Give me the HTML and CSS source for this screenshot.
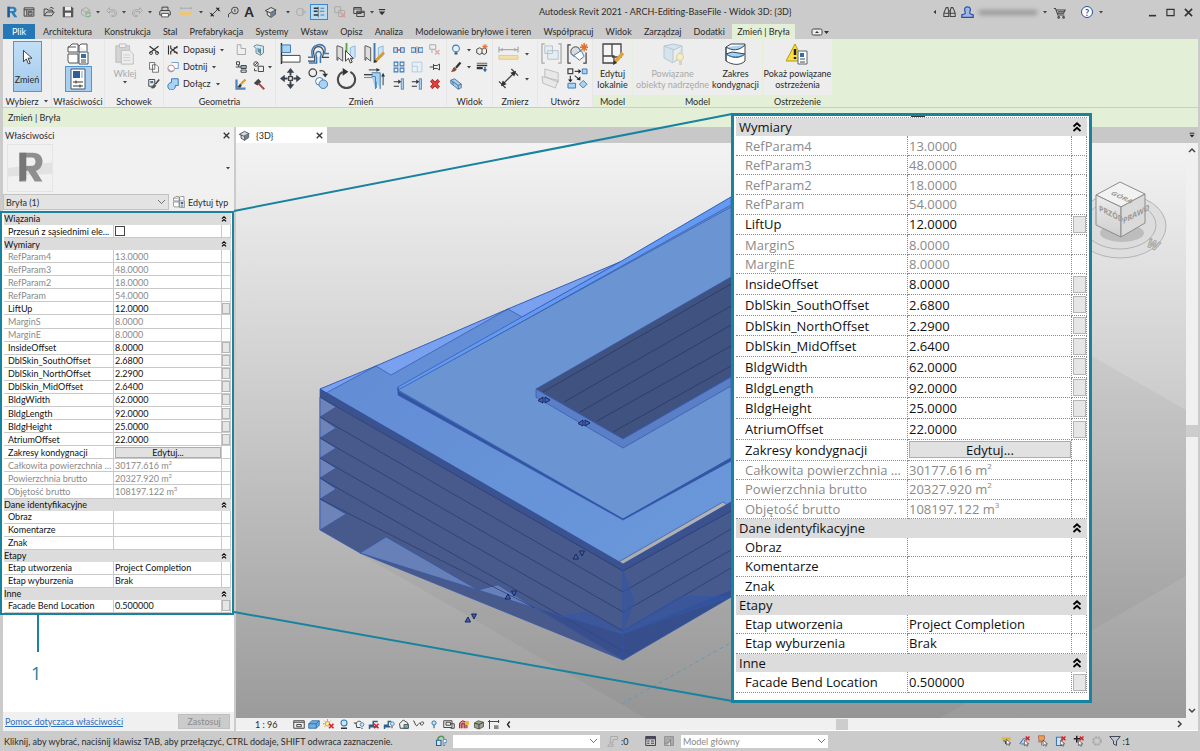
FILE: index.html
```html
<!DOCTYPE html>
<html lang="pl">
<head>
<meta charset="utf-8">
<title>Autodesk Revit 2021 - ARCH-Editing-BaseFile - Widok 3D: {3D}</title>
<link rel="stylesheet" href="styles.css">
</head>
<body>
<svg class="defs" aria-hidden="true">
  <defs>
    <symbol id="caret" viewBox="0 0 6 6"><path d="M1 2h4L3 4.500z" fill="#444"/></symbol>
    <symbol id="logo" viewBox="0 0 16 16"><path d="M2 1h7c7 0 6 8 2 8l4 6h-4L7 9H5v6H2z M5 3.500v3h4c2 0 2-3 0-3z" fill="#2a7fc0" fill-rule="evenodd"/><path d="M2 1h3v14H2z" fill="#1c5c96"/></symbol>
    <symbol id="home" viewBox="0 0 16 16"><path d="M1.500 2.500h13v11h-13zM1.500 5h13M5 5v8" class="st"/><path d="M7 7h5v5H7zM8 9h3" class="st"/></symbol>
    <symbol id="open" viewBox="0 0 16 16"><path d="M1.500 13V4h4l1 1.500h6V8M1.500 13 5 8h10l-3.500 5z" class="st"/><path d="M9 3c2-2 4-1 5 1" class="st"/></symbol>
    <symbol id="save" viewBox="0 0 16 16"><path d="M1 1h12l2 2v12H1z" fill="#555"/><path d="M4 1h8v5H4zM4 9h8v5H4z" fill="#eee"/></symbol>
    <symbol id="sync" viewBox="0 0 16 16"><path d="M2 5l6-3 5 3v4M2 5v6l5 3M2 5l6 3 5-3M8 8v5" class="gl"/><path d="M8 11c2-3 5-3 6 0M14 12c-1 3-5 3-6 1" stroke="#83b98a" stroke-width="2" fill="none"/></symbol>
    <symbol id="undo" viewBox="0 0 16 16"><path d="M6 2 2 6l4 4V7.500h5c3 0 3 5 0 5H9v1.500h3c5-1 4-9 0-9H6z" class="gl"/></symbol>
    <symbol id="redo" viewBox="0 0 16 16"><path d="m10 2 4 4-4 4V7.500H5c-3 0-3 5 0 5h2v1.500H4c-5-1-4-9 0-9h6z" class="gl"/></symbol>
    <symbol id="print" viewBox="0 0 16 16"><path d="M4 6V1.500h8V6M2 6h12l1 2v4H1V8z" class="st" fill="#fff"/><path d="M3.500 10h9v4.500h-9z" fill="#fff" stroke="#333"/></symbol>
    <symbol id="ruler" viewBox="0 0 16 16"><path d="M1 3h14M1 1.500v3M15 1.500v3" class="gl"/><path d="M0 8h16v4H0z" fill="#ecc77b"/></symbol>
    <symbol id="dim" viewBox="0 0 16 16"><path d="M3 13 13 3M1 9l5 5M10 2l5 5" class="st"/><path d="m2 14 1-5 4 4zM14 2l-1 5-4-4z" fill="#333"/></symbol>
    <symbol id="tag" viewBox="0 0 16 16"><circle cx="10.500" cy="6" r="4.500" class="st"/><path d="M10.500 4v4M6 8l-4 3v4" class="st"/></symbol>
    <symbol id="cube" viewBox="0 0 16 16"><path d="m1 6 7-4 6 3v6l-6 4-5-3V7" fill="#d6dbe2" stroke="#444" stroke-width="1.300"/><path d="m0 6 7 3 8-4M8 9v6" class="st"/><path d="M8 9l6-3v5l-6 4z" fill="#6e7d90"/></symbol>
    <symbol id="section" viewBox="0 0 16 16"><circle cx="7" cy="8" r="5" class="gl"/><path d="m9 3 6 5-6 5z" fill="#b5b5b5"/></symbol>
    <symbol id="thin" viewBox="0 0 16 16"><path d="M1 3h6M1 7h5M1 12h6" stroke="#333" stroke-width="2"/><path d="M10 3h5M9 7h6M10 12h5M7 1v14" stroke="#333" stroke-width=".8"/></symbol>
    <symbol id="closewin" viewBox="0 0 16 16"><path d="M1 1h8v8H1zM6 6h8v8H6z" class="gl"/><path d="m9 9 6 6m0-6-6 6" stroke="#e39a9a" stroke-width="2"/></symbol>
    <symbol id="switch" viewBox="0 0 16 16"><path d="M1 2h10v8H1zM1 4h10M5 7h10v7H5z" class="st" fill="#ddd"/><path d="M5 8.500h10" class="st"/></symbol>
    <symbol id="bino" viewBox="0 0 16 16"><path d="M2 6 4 2h2l1 4v7H1V9zM14 6l-2-4h-2L9 6v7h6V9zM7 6h2v3H7M1 9h6M9 9h6" class="st" fill="#eee"/></symbol>
    <symbol id="user" viewBox="0 0 16 16"><path d="M8 1c4 0 4 3 3 6-1 2 0 3 4 4v3H1v-3c4-1 5-2 4-4C4 4 4 1 8 1z" fill="#9db8e6" stroke="#2b4fa0" stroke-width="1.500"/></symbol>
    <symbol id="cart" viewBox="0 0 16 16"><path d="M1 3h2l3 8h8M4 5h11l-2 4H5M6 7h8" class="st"/><circle cx="7" cy="14" r="1" class="st"/><circle cx="13" cy="14" r="1" class="st"/></symbol>
    <symbol id="chev2" viewBox="0 0 10 12"><path d="M1.500 5.500 5 2.300l3.500 3.200M1.500 10 5 6.800 8.500 10" fill="none" stroke="#000" stroke-width="1.800"/></symbol>
    <symbol id="x" viewBox="0 0 10 10"><path d="m1 1 8 8M9 1 1 9" stroke="#333" stroke-width="1.800"/></symbol>
    <symbol id="cursor" viewBox="0 0 16 24"><path d="M3 2v16l4-4 3 7 2.500-1-3-7H15z" fill="#fff" stroke="#333" stroke-width="1.300"/></symbol>
    <symbol id="types" viewBox="0 0 22 22"><path d="M2 4 5 1h6v8H1V4zM12 3l2-2h6v7M1 11l10 0v9H2l-1-2zM12 2v7M1 4h8" fill="#fff" stroke="#555"/><path d="M12 9h9v12h-9z" fill="#fff" stroke="#456"/><path d="M14 11h5v4h-5z" fill="#356ea5"/><path d="M14 17h5M14 19h5" stroke="#444"/></symbol>
    <symbol id="props" viewBox="0 0 16 22"><path d="M1 1h14v20H1z" fill="#fff" stroke="#456"/><path d="M3 3h7v7H3z" fill="#2e6094"/><path d="M11 3h2v7h-2z" fill="#b9d0e4"/><path d="M3 14h10M3 18h10M6 12.500v3M10 16.500v3" stroke="#333"/></symbol>
    <symbol id="paste" viewBox="0 0 22 24"><path d="M1 3h15v18H1z" fill="#d4d4d4" stroke="#bbb"/><path d="M5 1h7v4H5zM7 8h9l4 4v11H7z" fill="#eee" stroke="#bbb"/><path d="M9 13h8M9 16h8M9 19h8" stroke="#ccc"/></symbol>
    <symbol id="cut" viewBox="0 0 16 16"><path d="m2 3 12 9M14 3 2 12" stroke="#333" stroke-width="1.600"/><circle cx="4" cy="12" r="2" class="st"/><circle cx="12" cy="12" r="2" class="st"/></symbol>
    <symbol id="copy" viewBox="0 0 16 16"><path d="M2 2h7v9H2zM6 5h5l3 3v7H6z" fill="#f6f6f6" stroke="#555"/></symbol>
    <symbol id="match" viewBox="0 0 16 16"><path d="M1 2h8v9H1z" class="st"/><path d="M3 4h4v3H3z" fill="#3f79b5"/><path d="M3 13c3 0 3-4 5-5l3 2c-2 4-4 5-8 3z" fill="#555"/><path d="m10 8 5-6" stroke="#444" stroke-width="2"/></symbol>
    <symbol id="cope" viewBox="0 0 16 16"><path d="M2 2v12M5 2v4l3 2-3 2v4M8 8l6-5M8 8l6 5M9 5h5M9 11h5" stroke="#333" stroke-width="1.500" fill="none"/></symbol>
    <symbol id="cutgeo" viewBox="0 0 16 16"><path d="M6 2h9v8h-5" fill="#f4faff" stroke="#4a88bd"/><circle cx="5.500" cy="10" r="4.500" fill="#fff" stroke="#c66"/><path d="M2 10a4 4 0 0 0 6 3" stroke="#4a88bd" fill="none"/></symbol>
    <symbol id="join" viewBox="0 0 16 16"><path d="M6 1h9v9h-4a5 5 0 1 1-5-4z" fill="#a9d3f2" stroke="#3f79b5" stroke-width="1.300"/></symbol>
    <symbol id="joinend" viewBox="0 0 16 16"><path d="M3 1h5v5h6v8H3z" class="gl"/></symbol>
    <symbol id="beam" viewBox="0 0 16 16"><path d="M2 1h4v4H2zM1 8h14M5 5v3M8 6h7v4H8zM8 12h7v3H8z" class="st"/><path d="M9 7h5v2H9z" fill="#8ab8dd"/></symbol>
    <symbol id="demolish" viewBox="0 0 16 16"><path d="M2 2v12h12" stroke="#4a88bd" stroke-width="3" fill="none"/><path d="M6 10 14 2" stroke="#e39a2c" stroke-width="3"/><path d="m3 12 4-4 2 2-2 3" fill="#333"/></symbol>
    <symbol id="uncope" viewBox="0 0 16 16"><path d="m1 3 4-2 9 2v9l-4 3-6-3V6z" fill="#cfe4f5" stroke="#476"/><path d="m6 5 4 2v6l-4-3z" fill="#5d92c4"/><path d="M10 6v8" stroke="#476"/></symbol>
    <symbol id="split" viewBox="0 0 16 16"><circle cx="4" cy="4" r="3" class="st"/><path d="m2 6 4-4M7 7h7v7H7z" class="st"/><path d="M2 10v3h3" class="st"/></symbol>
    <symbol id="hammer" viewBox="0 0 16 16"><path d="m1 7 6-6 4 4-5 5z" fill="#444"/><path d="m7 7 8 8" stroke="#9a5151" stroke-width="2.500"/></symbol>
    <symbol id="align" viewBox="0 0 22 22"><path d="M1.500 0v22" stroke="#333" stroke-width="1.500"/><path d="M2 2h9v8H2z" fill="#a9d3f2" stroke="#3f79b5"/><path d="M2 13h19v7H2z" fill="#fff" stroke="#444"/></symbol>
    <symbol id="offset" viewBox="0 0 22 22"><path d="M0 19h7v-4C1 0 21 0 15 15h7" fill="none" stroke="#444" stroke-width="1.200"/><path d="M0 15h5C-1-2 23-2 17 11h5M1 21h8v-6c-4-8 8-8 4 0v6" fill="none" stroke="#3f79b5" stroke-width="1.600"/></symbol>
    <symbol id="mirror" viewBox="0 0 22 22"><path d="m2 3 5 2v14l-5-4v3H1V3z" fill="#ddd" stroke="#555"/><path d="m20 3-5 2v14l5-4z" fill="#cde5f7" stroke="#8ab8dd"/><path d="M11 0v9" stroke="#59a83f" stroke-width="2"/><path d="M10 8v11l3-3 2 5 2-1-2-4h3z" fill="#fff" stroke="#333"/></symbol>
    <symbol id="mirror2" viewBox="0 0 22 22"><path d="m2 3 5 2v14l-5-4v3H1V3z" fill="#ddd" stroke="#555"/><path d="m20 3-5 2v12l5-4z" fill="#cde5f7" stroke="#8ab8dd"/><path d="M11 0v20" stroke="#3f79b5" stroke-width="2"/><path d="m12 19 9-9" stroke="#d99b32" stroke-width="3"/><path d="m10 21 1-4 3 3z" fill="#333"/></symbol>
    <symbol id="move" viewBox="0 0 22 22"><path d="M11 0 7 5h3v3h2V5h3zM11 22l-4-5h3v-3h2v3h3zM0 11l5-4v3h3v2H5v3zM22 11l-5-4v3h-3v2h3v3z" fill="#3b4350"/><path d="M9 9h4v4H9z" class="st"/></symbol>
    <symbol id="copy2" viewBox="0 0 22 22"><circle cx="5" cy="5" r="4" class="st"/><path d="M12 3c4-1 6 1 6 4" class="st"/><path d="m15 6 3 4 3-4z" fill="#333"/><circle cx="12" cy="14" r="4" fill="#fff" stroke="#3f79b5"/><circle cx="16" cy="17" r="4.500" fill="#a9d3f2" stroke="#3f79b5"/></symbol>
    <symbol id="rotate" viewBox="0 0 22 22"><path d="M7 4a9 9 0 1 0 8 0" fill="none" stroke="#4a4a4a" stroke-width="2.200"/><path d="M7 0v8l6-4z" fill="#333"/></symbol>
    <symbol id="trim" viewBox="0 0 22 22"><path d="M0 7h10" stroke="#444" stroke-width="1.500"/><path d="M0 10h10M13 12v9" stroke="#4a88bd" stroke-width="1"/><path d="M8 5h9v17M12 22V9H8" fill="#a9d3f2" stroke="#3f79b5"/><path d="M20 8v10M5 2h9" stroke="#333"/><path d="m18 9 2-4 2 4zM13 0l4 2-4 2z" fill="#333"/></symbol>
    <symbol id="sp1" viewBox="0 0 16 16"><path d="M1 5h5v6H1zM10 5h5v6h-5z" fill="#cde5f7" stroke="#3f79b5" stroke-width="1.400"/><path d="M5 8h6" stroke="#c55" stroke-width="2"/></symbol>
    <symbol id="sp2" viewBox="0 0 16 16"><path d="M0 5h6v6H0zM10 5h6v6h-6z" fill="#cde5f7" stroke="#3f79b5" stroke-width="1.400"/><path d="M8 3v10" stroke="#c55"/></symbol>
    <symbol id="arr" viewBox="0 0 16 16"><path d="M1.500 1.500h5v5h-5zM9.500 1.500h5v5h-5zM1.500 9.500h5v5h-5zM9.500 9.500h5v5h-5z" fill="#e6f2fb" stroke="#3f79b5" stroke-width="1.400"/></symbol>
    <symbol id="scale" viewBox="0 0 16 16"><path d="M1.500 1.500h13v13h-13zM1.500 7h7v7.500" fill="#e6f0f6" stroke="#a9c4d6"/></symbol>
    <symbol id="pin" viewBox="0 0 16 16"><path d="M1 8h5M6 4v8M6 6h5l3-2v8l-3-2H6" class="st" fill="#fff"/></symbol>
    <symbol id="unpin" viewBox="0 0 16 16"><path d="M1 1h8v6H1zM4 7v5" class="gl"/><path d="m8 8 6 6m0-6-6 6" stroke="#e2a9a9" stroke-width="2"/></symbol>
    <symbol id="ext" viewBox="0 0 16 16"><path d="M1 5h7M1 11h7" stroke="#333" stroke-width="1.500"/><path d="M11 1h3v14h-3z" fill="#a9d3f2" stroke="#3f79b5"/><path d="m7 2 4 3-4 3z" fill="#333"/></symbol>
    <symbol id="redx" viewBox="0 0 16 16"><path d="m3 3 10 10M13 3 3 13" stroke="#a11" stroke-width="4.500"/><path d="m3 3 10 10M13 3 3 13" stroke="#e34545" stroke-width="2.500"/></symbol>
    <symbol id="bulb" viewBox="0 0 16 16"><circle cx="8" cy="6" r="4.500" fill="#e2f1fb" stroke="#3f79b5" stroke-width="1.400"/><path d="M6 11h4v3H6z" fill="#456"/></symbol>
    <symbol id="brush" viewBox="0 0 16 16"><path d="M1 14c3-1 2-5 5-6l3 3c-2 3-4 4-8 3z" fill="#8b4a2c"/><path d="m8 9 6-7" stroke="#333" stroke-width="3"/></symbol>
    <symbol id="box" viewBox="0 0 16 16"><path d="m1 3 5-2 9 7v5l-4 2-10-8z" fill="#a9cbe6" stroke="#2f5f8d"/><path d="m1 3 10 7 4-2M11 10v5M4 5v4" fill="none" stroke="#2f5f8d"/></symbol>
    <symbol id="displace" viewBox="0 0 16 16"><path d="m1 7 4-2 3 2v5l-3 2-4-2zM8 7l3-2 3 2v5l-3 2-3-2" class="st"/><path d="M12 0v7M8.500 3.500h7M9.500 1l5 5m0-5-5 5" stroke="#e1702c" stroke-width="1.300"/></symbol>
    <symbol id="lw" viewBox="0 0 16 16"><path d="M1 3h14" stroke="#333"/><path d="M1 6h14" stroke="#333" stroke-width="2"/><path d="M1 9.500h8" stroke="#333" stroke-width="3"/><path d="m9 11 3 4 3-4z" fill="#2d66b5"/><path d="M12 8v4" stroke="#2d66b5" stroke-width="2"/></symbol>
    <symbol id="meas" viewBox="0 0 22 22"><path d="M1 7h20M1 4v6M21 4v6" class="gl"/><path d="m2 7 3-2v4zM20 7l-3-2v4z" fill="#aaa"/><path d="M1 13h20v4H1z" fill="#f3dfae" stroke="#e0c98e"/></symbol>
    <symbol id="dimbig" viewBox="0 0 22 22"><path d="M4 18 18 4M1 14l7 7M14 1l7 7" class="st"/><path d="m3 19 2-6 4 4zM19 3l-2 6-4-4z" fill="#333"/></symbol>
    <symbol id="grp" viewBox="0 0 22 22"><path d="M4 1H1v20h3M18 1h3v20h-3" class="gl"/><path d="M4 3h8v8H4zM7 8h11v9H7z" fill="#e6edf2" stroke="#b6c2cc"/></symbol>
    <symbol id="grp2" viewBox="0 0 22 22"><path d="M4 2H1v19h3M17 21h3V10" class="st"/><circle cx="9" cy="9" r="5" fill="#d8dce2" stroke="#444"/><path d="m7 13 8-5 3 6-5 4z" fill="#fff" stroke="#3f79b5"/><path d="M18 0v9M13.500 4.500h9M15 1.500l6 6m0-6-6 6" stroke="#e1702c" stroke-width="1.500"/></symbol>
    <symbol id="sheets" viewBox="0 0 22 22"><path d="m4 1 14 4v10L4 9zM1 9l17 4-3 8-13-5z" fill="#e8e8e8" stroke="#bdbdbd"/></symbol>
    <symbol id="similar" viewBox="0 0 22 22"><path d="M1 1h5v5H1z" class="st"/><path d="M16 1h5v5h-5zM1 16h8v5H1zM17 13l4 4-4 4-4-4z" fill="#a9d3f2" stroke="#3f79b5"/><path d="M8 3.500h5M3.500 8v5M8 8l5 4" class="st"/><path d="m12 1 3 2.500L12 6zM1 12l2.500 3L6 12zM14 9v4l-4-1z" fill="#222"/></symbol>
    <symbol id="editip" viewBox="0 0 22 22"><path d="M1 1h9v12H1zM1 13h11v7H1zM10 1h9v13h-9" fill="#f5f5f5" stroke="#444" stroke-width="1.300"/><path d="m13 19 8-9" stroke="#e0a436" stroke-width="3.500"/><path d="m11 22 1-5 3 3z" fill="#333"/></symbol>
    <symbol id="related" viewBox="0 0 22 22"><path d="m2 3 9-2 9 2-8 4zM2 3v12l9 5V7M20 3v11l-8 5" fill="#d5e4ec" stroke="#b5c8d2"/><circle cx="18" cy="14" r="3.500" fill="#f7eec2" stroke="#d8d0a3"/><path d="M17 18h3v4h-3z" fill="#d8d4b7"/></symbol>
    <symbol id="floors" viewBox="0 0 22 22"><path d="m1 4 5-3h14v17c-5 5-13 4-19 0z" fill="#fff" stroke="#444"/><path d="M1 4c6 4 13 4 19-2M1 4v14M1 11l6-2 13 2c-6 5-13 4-19 0z" fill="#a9d3f2" stroke="#345"/><path d="M1 11c6 4 13 4 19 0" fill="none" stroke="#3f79b5"/></symbol>
    <symbol id="warn" viewBox="0 0 22 22"><path d="M9 1 0 18h17z" fill="#f8de42" stroke="#b79718"/><path d="M9 6v6M9 14v2" stroke="#222" stroke-width="2.500"/><path d="M12 8h9v13h-9z" fill="#fff" stroke="#567"/><path d="M14 10h4v4h-4z" fill="#356ea5"/><path d="M14 16h5M14 19h5" stroke="#444"/></symbol>
    <symbol id="grip" viewBox="0 0 14 8"><path d="M1 4.500 6 1v6zM8 1v6l5-3z" fill="#4062b0" stroke="#15265c"/></symbol>
    <symbol id="grip2" viewBox="0 0 14 10"><path d="m1 9 3-5 2.500 5zM7.500 1h5L10 6z" fill="#4062b0" stroke="#15265c"/></symbol>
    <symbol id="v1" viewBox="0 0 16 14"><path d="M1 2h14v10H1zM1 4h14M5 7h6v3H5z" class="st"/></symbol>
    <symbol id="v2" viewBox="0 0 16 14"><path d="m1 6 4-4h10v6l-4 4H1z" fill="#6db1e4" stroke="#1f5e95"/><path d="M1 6h10v6M11 6l4-4" fill="none" stroke="#1f5e95"/></symbol>
    <symbol id="v3" viewBox="0 0 16 14"><circle cx="6" cy="6" r="3" fill="#fde8a3" stroke="#c98714"/><path d="M6 0v2M0 6h2M2 2l1 1M10 2 9 3M2 10l1-1" stroke="#c98714" stroke-width="1.300"/><path d="m8 6 6 6m0-6-6 6" stroke="#d22" stroke-width="2.200"/></symbol>
    <symbol id="v4" viewBox="0 0 16 14"><circle cx="8" cy="5" r="4" fill="#c9e6f8" stroke="#2f79b3" stroke-width="1.400"/><path d="M4 12h8" stroke="#333" stroke-width="2"/></symbol>
    <symbol id="v5" viewBox="0 0 16 14"><path d="M1 5h3l1 6h5M4 6c1-4 6-4 7-2" class="st"/><circle cx="12" cy="7" r="2.500" fill="#c9e6f8" stroke="#2f79b3"/><path d="M11 12h2" class="st"/></symbol>
    <symbol id="v6" viewBox="0 0 16 14"><path d="M2 13V8h5V3h6M1 10h12" fill="none" stroke="#2f5f8d" stroke-width="2"/><path d="m8 6 6 6m0-6-6 6" stroke="#d22" stroke-width="2.200"/></symbol>
    <symbol id="v7" viewBox="0 0 16 14"><path d="M2 13V8h5V3h4M1 10h9" fill="none" stroke="#2f5f8d" stroke-width="1.800"/><circle cx="12.500" cy="6" r="2.500" fill="#c9e6f8" stroke="#2f79b3"/><path d="M12 9v3" class="st"/></symbol>
    <symbol id="v8" viewBox="0 0 16 14"><path d="m2 6 5-5 6 4v7H3z" class="st" fill="#ddd"/><path d="M8 7h6v5H8z" fill="#7fae93" stroke="#345"/></symbol>
    <symbol id="v9" viewBox="0 0 16 14"><path d="M0 2c3 0 2 6 5 7 3-4 4-4 5-4 3-3 5-1 4 1s-5 3-4-1" class="st"/></symbol>
    <symbol id="v10" viewBox="0 0 16 14"><circle cx="8" cy="5" r="2.800" fill="#c9e6f8" stroke="#2f79b3" stroke-width="1.300"/><path d="M8 8v4" class="st"/></symbol>
    <symbol id="v11" viewBox="0 0 16 14"><path d="M1 2h11v9H1zM4 4h6v4H4zM10 6h5v6h-5" class="st"/></symbol>
    <symbol id="v12" viewBox="0 0 16 14"><path d="M2 12V5l4-3 6 2v8M5 12V6h4v6" fill="#d98b8b" stroke="#833" stroke-width="1.300"/><circle cx="12" cy="5" r="3" fill="#f5b53d"/></symbol>
    <symbol id="v13" viewBox="0 0 16 14"><path d="m2 5 5-3 7 2v6l-6 3-6-2z" fill="#9aa68c" stroke="#444"/><path d="M2 5l6 2 6-3M8 7v6" class="st"/></symbol>
    <symbol id="v14" viewBox="0 0 16 14"><path d="M2 1v12M0 3h15M14 1v4" class="st"/><path d="M8 8h6v5H8z" fill="#888"/></symbol>
    <symbol id="lock" viewBox="0 0 16 16"><path d="M4 7c-1-6 7-7 8-2" fill="none" stroke="#4a9a5b" stroke-width="2"/><path d="M2 7h6v7H2z" fill="#c9e6f8" stroke="#2f5f8d" stroke-width="1.400"/><path d="M11 6h4v4h-2v4h-2z" fill="#fff" stroke="#2f79b3"/></symbol>
    <symbol id="press" viewBox="0 0 16 16"><path d="M5 2h9v4H8v4H4zM3 12h5v3H1z" class="gl"/></symbol>
    <symbol id="wset" viewBox="0 0 16 16"><path d="M1 2h13v12H1zM1 5h13" class="st" fill="#fff"/><path d="M1 2h13v3H1z" fill="#446"/><path d="M3 8h3M3 11h3M8 8h4M8 11h4" class="st"/></symbol>
    <symbol id="wset2" viewBox="0 0 16 16"><path d="M2 2h12v12H2z" fill="#aaa" stroke="#888"/><path d="M2 11h5l3-5v8" fill="#ddd" stroke="#777"/></symbol>
    <symbol id="arrow" viewBox="0 0 10 12"><path d="M1 1v9l2.500-2L5 11l1.500-1L5 7h3z" fill="#fff" stroke="#333"/></symbol>
    <symbol id="filter" viewBox="0 0 16 16"><path d="M1 2h14L10 8v6l-4-2V8z" fill="#b9cbd9" stroke="#445" stroke-width="1.300"/></symbol>
    <linearGradient id="topface" x1="0" y1="0" x2="1" y2="1"><stop offset="0" stop-color="#5f87d2"/><stop offset="1" stop-color="#6c9bdc"/></linearGradient>
    <linearGradient id="cubeface" x1="0" y1="0" x2="0" y2="1"><stop offset="0" stop-color="#ececec"/><stop offset="1" stop-color="#cfcfcf"/></linearGradient>
  </defs>
</svg>

<div class="app">
  <header class="titlebar">
    <div class="quick">
      <svg class="i16"><use href="#logo"/></svg>
      <button aria-label="Strona główna"><svg><use href="#home"/></svg></button>
      <button aria-label="Otwórz"><svg><use href="#open"/></svg></button>
      <button aria-label="Zapisz"><svg><use href="#save"/></svg></button>
      <button aria-label="Synchronizuj"><svg><use href="#sync"/></svg></button>
      <button aria-label="Więcej"><svg class="ct"><use href="#caret"/></svg></button>
      <button aria-label="Cofnij"><svg><use href="#undo"/></svg></button>
      <button aria-label="Lista cofania"><svg class="ct"><use href="#caret"/></svg></button>
      <button aria-label="Ponów"><svg><use href="#redo"/></svg></button>
      <button aria-label="Lista ponowień"><svg class="ct"><use href="#caret"/></svg></button>
      <button aria-label="Drukuj"><svg><use href="#print"/></svg></button>
      <button aria-label="Zmierz"><svg><use href="#ruler"/></svg></button>
      <button aria-label="Opcje pomiaru"><svg class="ct"><use href="#caret"/></svg></button>
      <button aria-label="Wymiar"><svg><use href="#dim"/></svg></button>
      <button aria-label="Etykieta"><svg><use href="#tag"/></svg></button>
      <button class="bigA">A</button>
      <button aria-label="Widok 3D"><svg><use href="#cube"/></svg></button>
      <button aria-label="Opcje widoku"><svg class="ct"><use href="#caret"/></svg></button>
      <button aria-label="Przekrój"><svg><use href="#section"/></svg></button>
      <button class="on" aria-label="Cienkie linie"><svg><use href="#thin"/></svg></button>
      <button aria-label="Zamknij nieaktywne"><svg><use href="#closewin"/></svg></button>
      <button aria-label="Przełącz okna"><svg><use href="#switch"/></svg></button>
      <button aria-label="Lista okien"><svg class="ct"><use href="#caret"/></svg></button>
      <button aria-label="Dostosuj"><svg class="i10" viewBox="0 0 10 10"><path d="M1 2h8" stroke="#333" stroke-width="1.500"/><path d="M1 4.500h8L5 9z" fill="#333"/></svg></button>
    </div>
    <h1>Autodesk Revit 2021 - ARCH-Editing-BaseFile - Widok 3D: {3D}</h1>
    <div class="account">
      <svg viewBox="0 0 6 6" class="ct"><path d="M4 1v4L1.500 3z" fill="#333"/></svg>
      <button aria-label="Szukaj"><svg><use href="#bino"/></svg></button>
      <button aria-label="Konto"><svg><use href="#user"/></svg></button>
      <span class="hidden-name"></span>
      <svg class="ct"><use href="#caret"/></svg>
      <button aria-label="Sklep"><svg><use href="#cart"/></svg></button>
      <button aria-label="Pomoc" class="help">?</button>
      <svg class="ct"><use href="#caret"/></svg>
    </div>
    <div class="winbtns">
      <button aria-label="Minimalizuj"><svg viewBox="0 0 10 10"><path d="M1 8.500h8" stroke="#333" stroke-width="1.800"/></svg></button>
      <button aria-label="Maksymalizuj"><svg viewBox="0 0 10 10"><path d="M1 1.500h8v7H1z" fill="none" stroke="#333" stroke-width="1.300"/></svg></button>
      <button aria-label="Zamknij"><svg><use href="#x"/></svg></button>
    </div>
  </header>

  <nav class="tabs">
    <a class="file" href="#">Plik</a>
    <div class="tablist">
      <a href="#">Architektura</a><a href="#">Konstrukcja</a><a href="#">Stal</a><a href="#">Prefabrykacja</a><a href="#">Systemy</a><a href="#">Wstaw</a><a href="#">Opisz</a><a href="#">Analiza</a><a href="#">Modelowanie bryłowe i teren</a><a href="#">Współpracuj</a><a href="#">Widok</a><a href="#">Zarządzaj</a><a href="#">Dodatki</a>
    </div>
    <a class="active" href="#">Zmień | Bryła</a>
    <button class="collapse" aria-label="Zwiń wstążkę"><svg viewBox="0 0 18 8"><rect x="1" y="1" width="10" height="6" rx="1.500" fill="#eee" stroke="#444"/><path d="M4 5h4L6 3zM13 3h5l-2.500 3z" fill="#333"/></svg></button>
  </nav>

  <div class="ribbon">
    <section class="panel select">
      <div class="body"><button class="modify"><svg><use href="#cursor"/></svg>Zmień</button></div>
      <h2>Wybierz <svg class="ct"><use href="#caret"/></svg></h2>
    </section>
    <section class="panel">
      <div class="body stack"><button aria-label="Typy"><svg><use href="#types"/></svg></button><button class="on" aria-label="Właściwości"><svg><use href="#props"/></svg></button></div>
      <h2>Właściwości</h2>
    </section>
    <section class="panel">
      <div class="body clip">
        <button class="tall dim"><svg><use href="#paste"/></svg>Wklej<svg class="ct"><use href="#caret"/></svg></button>
        <div class="small one"><button aria-label="Wytnij"><svg><use href="#cut"/></svg></button><button aria-label="Kopiuj"><svg><use href="#copy"/></svg></button><button aria-label="Uzgodnij"><svg><use href="#match"/></svg></button></div>
      </div>
      <h2>Schowek</h2>
    </section>
    <section class="panel">
      <div class="body geo">
        <button><svg><use href="#cope"/></svg>Dopasuj<svg class="ct"><use href="#caret"/></svg></button><button aria-label="Dach"><svg><use href="#joinend"/></svg></button><button aria-label="Otwór"><svg><use href="#uncope"/></svg></button><i></i>
        <button><svg><use href="#cutgeo"/></svg>Dotnij<svg class="ct"><use href="#caret"/></svg></button><button aria-label="Belka"><svg><use href="#beam"/></svg></button><button aria-label="Podziel"><svg><use href="#split"/></svg></button><svg class="ct"><use href="#caret"/></svg>
        <button><svg><use href="#join"/></svg>Dołącz<svg class="ct"><use href="#caret"/></svg></button><button aria-label="Maluj"><svg><use href="#demolish"/></svg></button><button aria-label="Wyburz"><svg><use href="#hammer"/></svg></button><i></i>
      </div>
      <h2>Geometria</h2>
    </section>
    <section class="panel">
      <div class="body mod">
        <div class="large"><button aria-label="Wyrównaj"><svg><use href="#align"/></svg></button><button aria-label="Odsunięcie"><svg><use href="#offset"/></svg></button><button aria-label="Lustro"><svg><use href="#mirror"/></svg></button><button aria-label="Lustro z osią"><svg><use href="#mirror2"/></svg></button><button aria-label="Przesuń"><svg><use href="#move"/></svg></button><button aria-label="Kopiuj"><svg><use href="#copy2"/></svg></button><button aria-label="Obróć"><svg><use href="#rotate"/></svg></button><button aria-label="Przytnij"><svg><use href="#trim"/></svg></button></div>
        <div class="small three"><button aria-label="Rozdziel"><svg><use href="#sp1"/></svg></button><button aria-label="Rozdziel z odstępem"><svg><use href="#sp2"/></svg></button><button aria-label="Odepnij"><svg><use href="#unpin"/></svg></button><button aria-label="Szyk"><svg><use href="#arr"/></svg></button><button aria-label="Skala"><svg><use href="#scale"/></svg></button><button aria-label="Przypnij"><svg><use href="#pin"/></svg></button><button aria-label="Wydłuż"><svg><use href="#ext"/></svg></button><button aria-label="Wydłuż wiele"><svg><use href="#ext"/></svg></button><button aria-label="Usuń"><svg><use href="#redx"/></svg></button></div>
      </div>
      <h2>Zmień</h2>
    </section>
    <section class="panel">
      <div class="body small view3"><button aria-label="Ukryj"><svg><use href="#bulb"/></svg></button><svg class="ct"><use href="#caret"/></svg><button aria-label="Przemieść"><svg><use href="#displace"/></svg></button><button aria-label="Zastąp"><svg><use href="#brush"/></svg></button><svg class="ct"><use href="#caret"/></svg><button aria-label="Szerokość linii"><svg><use href="#lw"/></svg></button><button aria-label="Ramka"><svg><use href="#box"/></svg></button></div>
      <h2>Widok</h2>
    </section>
    <section class="panel">
      <div class="body large meas"><button aria-label="Zmierz"><svg><use href="#meas"/></svg></button><svg class="ct"><use href="#caret"/></svg><button aria-label="Wymiar"><svg><use href="#dimbig"/></svg></button><svg class="ct"><use href="#caret"/></svg></div>
      <h2>Zmierz</h2>
    </section>
    <section class="panel">
      <div class="body large create"><button aria-label="Zespół"><svg><use href="#grp"/></svg></button><button aria-label="Grupa"><svg><use href="#grp2"/></svg></button><button aria-label="Części"><svg><use href="#sheets"/></svg></button><button aria-label="Utwórz podobne"><svg><use href="#similar"/></svg></button></div>
      <h2>Utwórz</h2>
    </section>
    <section class="panel ctx">
      <div class="body row"><button class="tall"><svg><use href="#editip"/></svg>Edytuj<br>lokalnie</button></div>
      <h2>Model</h2>
    </section>
    <section class="panel ctx">
      <div class="body row"><button class="tall dim"><svg><use href="#related"/></svg>Powiązane<br>obiekty nadrzędne</button><button class="tall"><svg><use href="#floors"/></svg>Zakres<br>kondygnacji</button></div>
      <h2>Model</h2>
    </section>
    <section class="panel ctx">
      <div class="body row"><button class="tall"><svg><use href="#warn"/></svg>Pokaż powiązane<br>ostrzeżenia</button></div>
      <h2>Ostrzeżenie</h2>
    </section>
  </div>
  <div class="options">Zmień | Bryła</div>

  <main class="work">
    <aside class="palette">
      <div class="phead"><h2>Właściwości</h2><button aria-label="Zamknij"><svg><use href="#x"/></svg></button></div>
      <div class="preview"><div class="thumb"><svg viewBox="0 0 46 46"><path d="M0 23 46 17v12L0 32z" fill="#e2e2e2"/><path d="M12 7h14c14 0 12 17 3 19l7 11h-8l-7-11h-2v11h-7z M19 12v9h6c5 0 5-9 0-9z" fill="#8f8f8f" fill-rule="evenodd"/><path d="M12 7h7v28l-7 2z" fill="#777"/></svg></div><svg class="ct"><use href="#caret"/></svg></div>
      <div class="typebar"><select aria-label="Typ elementu"><option>Bryła (1)</option></select><button><svg><use href="#types"/></svg>Edytuj typ</button></div>
      <div class="gridbox"><table class="props" id="props-small"></table></div>
      <div class="empty"></div>
      <div class="pfoot"><a href="#">Pomoc dotyczaca właściwości</a><button disabled>Zastosuj</button></div>
    </aside>

    <section class="viewport">
      <div class="viewtabs"><div class="viewtab"><svg><use href="#cube"/></svg><span>{3D}</span><button aria-label="Zamknij kartę"><svg><use href="#x"/></svg></button></div><svg class="more" viewBox="0 0 10 10"><path d="M1 2h8" stroke="#222" stroke-width="1.500"/><path d="M1 4.500h8L5 9z" fill="#222"/></svg></div>
      <div class="canvasrow">
        <svg class="scene" viewBox="236 143 950 575" preserveAspectRatio="xMinYMin slice">
          <path d="M360 554 645 718H940L1186 576V410L1090 355z" fill="#000" opacity=".035"/>
          <g stroke="#3057ae" stroke-width=".7" stroke-linejoin="round">
            <path d="m320 389 56-23 132-57 112-47 111-65 100-58v440l-108-77-108 62z" fill="url(#topface)"/>
            <path d="m320 389 56-23-50 27zM376 366l132-57-117 66zM508 309l112-47-98 55z" fill="#7aa1f0"/>
            <path d="m620 262 111-65v8L398 391v-4l124-70z" fill="#659af2"/>
            <path d="m398 390 333-183v251l-108 61z" fill="#6b94d3"/>
            <path d="M398 387v4l225 128 108-61v3l-108 59-225-125z" fill="#35549f"/>
            <path d="m623 564 108-62v95l-108 63z" fill="#465a8d"/>
            <path d="m320 389 303 175v96L360 553l-40-23z" fill="#485a8c"/>
            <path d="M320 389v7l303 175 108-60v-9l-108 62z" fill="#3a5290" stroke="none"/>
            <path d="m320 397 16 10-16 10zM320 417l16 11-16 10zM320 438l16 10-16 10zM320 458l16 10-16 10zM320 478l16 11-16 10zM320 499l26 15-26 16z" fill="#6e83b8"/>
            <path d="m360 553 26-16 92 53zM478 590l20-5 37 23z" fill="#6880b8"/>
            <path d="m320 397 303 174 108-60M320 417l303 175 108-63M320 438l303 174 108-62M320 458l303 173 108-63M320 478l303 173M320 499l215 109" fill="none" stroke="#26386c"/>
            <path d="m536 608 87 26 108-44v7l-108 63z" fill="#324a8e" opacity=".7"/>
            <path d="m559 617 27-5 37 20M623 631l58-35 50 1-108 36zM623 571l11 30-11 33M623 564v96" fill="#3355a6" fill-opacity=".55"/>
            <path d="m536 389 195-112v100l-108 62z" fill="#40527f"/>
            <path d="M536 389v8l87 51 108-62v-9l-108 62z" fill="#5b7fc7"/>
            <path d="m543 392 188-108M564 402l167-96M580 412l151-87M597 421l134-75M613 432l118-66" stroke="#26345f" fill="none"/>
          </g>
          <use href="#grip" x="537" y="396" width="14" height="8"/><use href="#grip" x="577" y="419" width="14" height="8"/>
          <use href="#grip2" x="572" y="550" width="14" height="10"/><use href="#grip2" x="504" y="590" width="14" height="10"/><use href="#grip2" x="464" y="613" width="14" height="10"/>
          <path d="m622 704 110-62" stroke="#6699b5" stroke-dasharray="4 3"/>
          <g fill="none" stroke="#b3b3b3">
            <ellipse cx="1120" cy="226" rx="46" ry="32" fill="#dedede"/><ellipse cx="1120" cy="225" rx="36" ry="24" fill="#dcdcdc"/>
            <ellipse cx="1122" cy="233" rx="22" ry="9" fill="#bdbdbd" stroke="none"/>
            <path d="m1120 182 25 12-24 13-25-12z" fill="#f2f2f2" stroke="#8d8d8d"/><path d="m1096 195 25 12v30l-25-12z" fill="url(#cubeface)" stroke="#8d8d8d"/><path d="m1145 194-24 13v30l24-14z" fill="#dadada" stroke="#8d8d8d"/>
          </g>
          <g class="cubetext"><text transform="matrix(.9 .42 -.6 .5 1110 194)">GÓRA</text><text transform="matrix(.88 .42 0 1 1099 211)">PRZÓD</text><text transform="matrix(.88 -.48 0 1 1123 224)">PRAWO</text><text class="compass" transform="matrix(.9 .4 -.5 .9 1146 246)">W</text></g>
        </svg>
        <div class="vscroll"><svg viewBox="0 0 8 6"><path d="m1 5 3-3 3 3" class="ar"/></svg><span></span><svg viewBox="0 0 8 6"><path d="m1 1 3 3 3-3" class="ar"/></svg></div>
      </div>
      <div class="viewbar">
        <span class="scale">1 : 96</span>
        <div class="vicons" id="vicons"><svg><use href="#v1"/></svg><svg><use href="#v2"/></svg><svg><use href="#v3"/></svg><svg><use href="#v4"/></svg><svg><use href="#v5"/></svg><svg><use href="#v6"/></svg><svg><use href="#v7"/></svg><svg><use href="#v8"/></svg><svg><use href="#v9"/></svg><svg><use href="#v10"/></svg><svg><use href="#v11"/></svg><svg><use href="#v12"/></svg><svg><use href="#v13"/></svg><svg><use href="#v14"/></svg><svg viewBox="0 0 16 14"><path d="M9 3 6 7l3 4" stroke="#222" stroke-width="1.800" fill="none"/></svg></div>
        <div class="hscroll"><span></span><svg viewBox="0 0 6 8"><path d="m1 1 3 3-3 3" class="ar"/></svg></div>
      </div>
    </section>
  </main>

  <footer class="status">
    <span class="msg">Kliknij, aby wybrać, naciśnij klawisz TAB, aby przełączyć, CTRL dodaje, SHIFT odwraca zaznaczenie.</span>
    <svg><use href="#lock"/></svg>
    <select aria-label="Zestaw zadań"><option></option></select>
    <svg class="pr"><use href="#press"/></svg><span class="cnt">:0</span>
    <svg><use href="#wset"/></svg><svg><use href="#wset2"/></svg>
    <select aria-label="Opcja projektu"><option>Model główny</option></select>
    <div class="sel">
      <svg viewBox="0 0 16 16"><path d="M1 3h12v4H1z" fill="#e3b53f"/><path d="M3 8h3v4" class="st"/><use href="#arrow" x="6" y="5" width="9" height="10"/></svg>
      <svg viewBox="0 0 16 16"><path d="m1 12 5-7h6M3 12h7" fill="#cde5f7" stroke="#3f79b5" stroke-width="1.500"/><path d="m9 2 5 5m0-5-5 5" stroke="#d22" stroke-width="2"/><use href="#arrow" x="6" y="6" width="9" height="10"/></svg>
      <svg viewBox="0 0 16 16"><path d="M2 1h8v3L9 8H3L2 4zM1 9h8M6 9v5" fill="#e9a545" stroke="#a55"/><use href="#arrow" x="7" y="6" width="9" height="10"/></svg>
      <svg viewBox="0 0 16 16"><path d="M2 3h7v11H2z" fill="#cde5f7" stroke="#3f79b5" stroke-width="1.500"/><path d="m9 2 5 5m0-5-5 5" stroke="#d22" stroke-width="2"/><use href="#arrow" x="6" y="6" width="9" height="10"/></svg>
      <svg viewBox="0 0 16 16"><path d="M5 1v9M1 5h9" stroke="#222" stroke-width="2"/><path d="m9 2 5 5m0-5-5 5" stroke="#d22" stroke-width="2"/><use href="#arrow" x="6" y="6" width="9" height="10"/></svg>
      <svg viewBox="0 0 16 16"><circle cx="8" cy="8" r="5" fill="none" stroke="#aaa" stroke-width="3" stroke-dasharray="3 1"/></svg>
      <svg><use href="#filter"/></svg>
    </div>
    <span class="cnt">:1</span>
  </footer>

  <div class="callout">
    <svg viewBox="0 0 1200 751" preserveAspectRatio="xMinYMin meet"><path d="M234 211 732 114M234 612 732 701M38 613V652" fill="none" stroke="#17839f" stroke-width="2"/></svg>
    <span class="num">1</span>
    <div class="magnifier"><div class="cutrow"><i></i></div><table class="props" id="props-large"></table></div>
  </div>
</div>
<script src="props.js"></script>
</body>
</html>
```
FILE: styles.css
```css
* { box-sizing: border-box; }
:root { --teal: #17839f; --chrome: #cbcbcb; --panel: #efefef; --green: #e4efd7; }
body { margin: 0; font: 9px/11px Lato, "Open Sans", sans-serif; color: #2b2b2b; background: var(--chrome); }
h1, h2 { margin: 0; font: inherit; white-space: nowrap; }
button { font: inherit; color: inherit; background: none; border: 0; padding: 0; display: flex; align-items: center; justify-content: center; }
a { color: inherit; text-decoration: none; white-space: nowrap; }
select { font: inherit; color: inherit; border: 0; border-radius: 0; appearance: none; }
svg { display: block; overflow: visible; flex: none; }
.defs { position: absolute; width: 0; height: 0; }
.st { fill: none; stroke: #444; stroke-width: 1.300; }
.gl { fill: none; stroke: #aaa; stroke-width: 1.300; }
.ar { fill: none; stroke: #444; stroke-width: 1.500; }
.ct { width: 6px; height: 6px; }

.app { position: relative; display: flex; flex-direction: column; height: 100vh; min-height: 751px; overflow: hidden; }

.titlebar { height: 24px; flex: none; display: flex; align-items: center; padding: 0 4px; }
.quick { display: grid; grid-template-columns: 15px 20px 20px 18px 17px 8px 17px 10px 17px 8px 22px 20px 10px 18px 17px 16px 27px 8px 17px 20px 21px 18px 7px 13px; justify-items: center; align-items: center; }
.quick svg { width: 12px; height: 12px; }
.quick .ct { width: 6px; height: 6px; }
.quick .i10 { width: 8px; height: 8px; }
.quick .on { width: 18px; height: 16px; background: #b9dcf4; border: 1px solid #3c87c8; }
.bigA { font-size: 13px; font-weight: 900; }
.titlebar h1 { margin-left: 151px; padding-bottom: 2px; }
.account { margin-left: auto; display: flex; align-items: center; gap: 5px; padding-right: 44px; }
.account button svg { width: 13px; height: 13px; }
.hidden-name { width: 58px; height: 5px; background: #999; filter: blur(2px); }
.help { width: 12px; height: 12px; margin-left: 10px; border: 1px solid #2b4fa0; border-radius: 50%; background: #fff; color: #2b4fa0; font-weight: 700; }
.winbtns { display: flex; gap: 9px; padding-right: 3px; }
.winbtns svg { width: 9px; height: 9px; }

.tabs { height: 15px; flex: none; display: flex; align-items: stretch; padding-left: 3px; }
.tabs a { display: flex; align-items: center; padding-bottom: 1px; }
.file { width: 32px; justify-content: center; background: #2577b5; color: #fff; }
.tablist { display: flex; justify-content: space-between; width: 682px; margin: 0 7px 0 8px; }
.tabs .active { width: 63px; justify-content: center; background: var(--green); }
.collapse { margin-left: 16px; }
.collapse svg { width: 18px; height: 8px; }

.ribbon { height: 68px; flex: none; display: grid; grid-template-columns: 49px 53px 59px 112px 171px 46px 45px 55px 40px 130px 70px; margin: 0 2px 0 3px; background: var(--green); }
.panel { display: flex; flex-direction: column; background: var(--panel); border-right: 1px solid #e6e6e6; }
.panel h2 { height: 12px; display: flex; align-items: center; justify-content: center; gap: 4px; }
.panel .body { height: 56px; padding-top: 2px; }
.panel.ctx { border-color: var(--green); }
.ctx h2 { background: var(--green); }
.select .body { display: flex; justify-content: center; }
.modify { width: 29px; height: 51px; flex-direction: column; gap: 8px; background: linear-gradient(#c2def5, #a4cbee); border: 1px solid #4f97d4; }
.modify svg { width: 12px; height: 17px; }
.stack { display: grid; justify-items: center; grid-template-rows: 25px 26px; }
.stack button { width: 27px; }
.stack svg { width: 22px; height: 22px; }
.stack .on { background: #a9d0f0; border: 1px solid #4f97d4; }
.clip { display: grid; grid-template-columns: 40px 17px; }
.tall { flex-direction: column; justify-content: flex-start; align-items: center; text-align: center; white-space: nowrap; line-height: 11px; }
.tall > svg:first-child { width: 22px; height: 22px; margin: 2px 0 3px; }
.dim { color: #a9a9a9; }
.small { display: grid; grid-auto-rows: 17px; justify-items: center; align-items: center; }
.small svg, .geo svg { width: 12px; height: 12px; }
.panel .ct { width: 6px; height: 6px; }
.three { grid-template-columns: repeat(3, 18px); }
.view3 { grid-template-columns: 18px 7px 20px; justify-content: start; }
.geo { display: grid; grid-template: repeat(3, 17px) / 64px 19px 17px 8px; align-items: center; padding-left: 3px; }
.geo button:nth-child(4n+1) { justify-content: flex-start; gap: 4px; }
.mod { display: grid; grid-template-columns: 114px 54px; }
.large { display: grid; grid-auto-rows: 25px; align-items: center; justify-items: center; }
.large svg { width: 21px; height: 21px; }
.mod .large { grid-template-columns: repeat(4, 28px); }
.meas { grid-template-columns: 30px 8px; }
.create { grid-template-columns: 26px 26px; }
.row { display: flex; justify-content: space-evenly; background: #ededed; }

.options { height: 20px; flex: none; margin: 0 2px 0 3px; padding: 4px 5px; background: var(--green); border-top: 1px solid #c9d0c2; }

.work { flex: 1; min-height: 0; display: grid; grid-template-columns: 231px minmax(0, 1fr); column-gap: 2px; padding: 0 2px 0 3px; }
.palette { display: flex; flex-direction: column; background: #f0f0f0; min-height: 0; }
.phead { height: 16px; display: flex; align-items: center; justify-content: space-between; padding: 0 4px 0 2px; }
.phead svg { width: 7px; height: 7px; }
.preview { height: 51px; display: flex; align-items: center; justify-content: space-between; padding: 0 3px 2px 4px; background: #f1f1f1; }
.thumb { border: 1px solid #e4e4e4; }
.thumb svg { width: 44px; height: 46px; }
.typebar { height: 17px; display: grid; grid-template-columns: 166px 1fr; gap: 2px; padding-bottom: 1px; }
.typebar select { background: #e3e3e3 no-repeat; border: 1px solid #c2c2c2; padding: 0 2px; }
.typebar select, .status select { background-image: linear-gradient(45deg, transparent 45%, #777 45% 60%, transparent 60%), linear-gradient(-45deg, transparent 45%, #777 45% 60%, transparent 60%); background-size: 4px 4px; background-position: right 6px center, right 3px center; background-repeat: no-repeat; }
.typebar button { gap: 3px; justify-content: flex-start; padding-left: 2px; }
.typebar svg { width: 12px; height: 12px; }
.gridbox { margin-left: -3px; border: 2px solid var(--teal); background: #fff; padding: 0 1px 0 2px; position: relative; z-index: 1; }
.empty { flex: 1; background: #fff; }
.pfoot { height: 19px; display: flex; align-items: center; justify-content: space-between; padding: 0 4px 0 2px; }
.pfoot a { color: #2f6fc0; text-decoration: underline; }
.pfoot button { width: 52px; height: 15px; background: #cbcbcb; color: #8c8c8c; border: 1px solid #c0c0c0; }

.props { width: 100%; table-layout: fixed; border-collapse: separate; border-spacing: 0; color: #111; }
.props th, .props td { padding: 0; text-align: left; font-weight: 400; white-space: nowrap; overflow: hidden; }
.props .label { text-overflow: ellipsis; }
.props .dimmed { color: #8a8a8a; }
.props .group { background: #dcdcdc; }
.props .group div { display: flex; justify-content: space-between; align-items: center; }
.props sup { font-size: 6px; line-height: 1; vertical-align: 4px; }
.props button, .props input { margin: 0; }
.props .edit { width: 100%; background: #e1e1e1; border: 1px solid #adadad; }
.props .assoc { width: 100%; background: #e6e6e6; border: 1px solid #b5b5b5; }

#props-small { height: 400px; line-height: 11px; }
#props-small .c1 { width: 110px; }
#props-small .c3 { width: 9px; }
#props-small .label { padding-left: 4px; }
#props-small th.label, #props-small td { border-bottom: 1px solid #c9c9c9; border-right: 1px solid #c9c9c9; }
#props-small td { padding-left: 1px; }
#props-small .group { border: 0; padding: 0 4px 0 0; }
#props-small .group svg { width: 6px; height: 8px; }
#props-small .edit, #props-small .assoc { height: 11px; }
#props-small input { appearance: none; display: block; width: 10px; height: 10px; border: 1px solid #444; background: #fff; }
#props-small .assoccell { padding: 0; }

.magnifier { position: absolute; left: 731px; top: 113px; width: 361px; height: 590px; border: 3px solid var(--teal); background: #fff; padding: 0 2px 5px; }
.cutrow { height: 2px; border-bottom: 1px dotted #999; }
.cutrow i { display: block; width: 14px; height: 1px; margin-left: 175px; background: #333; }
#props-large { height: 575px; font: 13px/16px "Open Sans", sans-serif; }
#props-large .c1 { width: 172px; }
#props-large .c3 { width: 15px; }
#props-large .label { padding-left: 9px; }
#props-large th.label, #props-large td { border-bottom: 1px dotted #8c8c8c; border-right: 1px dotted #8c8c8c; }
#props-large td { padding-left: 1px; }
#props-large .group { border: 0; padding: 0 5px 0 3px; }
#props-large .group svg { width: 10px; height: 12px; }
#props-large .edit { height: 17px; }
#props-large .assoc { height: 17px; }
#props-large sup { font-size: 8px; vertical-align: 6px; }

.viewport { display: flex; flex-direction: column; min-height: 0; }
.viewtabs { height: 16px; flex: none; display: flex; align-items: center; justify-content: space-between; background: #c8c8c8; padding-right: 3px; }
.viewtab { width: 91px; height: 16px; display: flex; align-items: center; gap: 6px; padding: 0 4px 0 3px; background: #fff; }
.viewtab svg { width: 11px; height: 11px; }
.viewtab button { margin-left: auto; }
.viewtab button svg { width: 7px; height: 7px; }
.more { width: 6px; height: 6px; }
.canvasrow { flex: 1; min-height: 0; display: grid; grid-template-columns: minmax(0, 1fr) 12px; }
.scene { width: 100%; height: 100%; overflow: hidden; background: linear-gradient(#f3f3f3, #c9c9c9 48%, #9b9b9b); }
.cubetext { font: 700 10px "Open Sans", sans-serif; fill: #999; }
.cubetext text { font-size: 8px; }
.cubetext .compass { font-size: 12px; fill: #ddd; stroke: #aaa; }
.vscroll { background: #f0f0f0; display: flex; flex-direction: column; align-items: center; justify-content: space-between; padding: 4px 0; }
.vscroll svg { width: 8px; height: 6px; }
.vscroll span { width: 12px; height: 12px; background: #cdcdcd; }
.viewbar { height: 13px; flex: none; display: flex; align-items: center; background: #f0f0f0; border-bottom: 1px solid #fff; }
.scale { width: 54px; padding-left: 19px; white-space: nowrap; }
.vicons { display: flex; gap: 3px; }
.vicons { padding-left: 3px; }
.vicons svg { width: 12px; height: 11px; }
.hscroll { flex: 1; display: flex; align-items: center; justify-content: flex-end; padding-right: 15px; gap: 329px; }
.hscroll span { width: 12px; height: 11px; background: #cdcdcd; }
.hscroll svg { width: 6px; height: 8px; }

.status { height: 20px; flex: none; display: flex; align-items: center; padding: 0 70px 0 4px; }
.status > svg, .sel svg { width: 12px; height: 12px; }
.msg { width: 431px; white-space: nowrap; }
.status select { width: 147px; height: 13px; padding: 0 2px; margin-left: 6px; background-color: #fff; color: #888; }
.status .pr { margin-left: 7px; }
.cnt { width: 26px; padding-left: 2px; }
.status svg + svg { margin-left: 6px; }
.sel { display: flex; gap: 0; margin-left: auto; }
.sel svg { margin-left: 6px; }
.status > .cnt:last-child { width: auto; }

.callout { position: absolute; inset: 0; pointer-events: none; z-index: 2; }
.callout > svg { width: 1200px; height: 751px; }
.num { position: absolute; left: 31px; top: 662px; font: 18px/22px "Open Sans", sans-serif; color: var(--teal); }
```
FILE: props.js
```js
const rows = [
  ["Wiązania"],
  ["Przesuń z sąsiednimi elementami", "check"],
  ["Wymiary"],
  ["RefParam4", "13.0000", "d"], ["RefParam3", "48.0000", "d"], ["RefParam2", "18.0000", "d"], ["RefParam", "54.0000", "d"],
  ["LiftUp", "12.0000", "b"],
  ["MarginS", "8.0000", "d"], ["MarginE", "8.0000", "d"],
  ["InsideOffset", "8.0000", "b"], ["DblSkin_SouthOffset", "2.6800", "b"], ["DblSkin_NorthOffset", "2.2900", "b"],
  ["DblSkin_MidOffset", "2.6400", "b"], ["BldgWidth", "62.0000", "b"], ["BldgLength", "92.0000", "b"],
  ["BldgHeight", "25.0000", "b"], ["AtriumOffset", "22.0000", "b"],
  ["Zakresy kondygnacji", "edit"],
  ["Całkowita powierzchnia k...", "30177.616 m<sup>2</sup>", "d"],
  ["Powierzchnia brutto", "20327.920 m<sup>2</sup>", "d"],
  ["Objętość brutto", "108197.122 m<sup>3</sup>", "d"],
  ["Dane identyfikacyjne"],
  ["Obraz", ""], ["Komentarze", ""], ["Znak", ""],
  ["Etapy"],
  ["Etap utworzenia", "Project Completion"], ["Etap wyburzenia", "Brak"],
  ["Inne"],
  ["Facade Bend Location", "0.500000", "b"]
];
rows[1][0] = "Przesuń z sąsiednimi ele...";

function rowHtml([name, value, kind]) {
  if (value === undefined) {
    return `<tr><th class="group" colspan="3"><div>${name}<svg><use href="#chev2"/></svg></div></th></tr>`;
  }
  let cell = value;
  if (value === "check") cell = `<input type="checkbox" aria-label="${name}">`;
  if (value === "edit") cell = `<button class="edit">Edytuj...</button>`;
  const dim = kind === "d" ? " dimmed" : "";
  const assoc = kind === "b" ? `<button class="assoc" aria-label="Powiąż parametr ${name}"></button>` : "";
  return `<tr><th class="label${dim}" scope="row">${name}</th><td class="value${dim}">${cell}</td><td class="assoccell">${assoc}</td></tr>`;
}

function fill(id, list) {
  document.getElementById(id).innerHTML =
    `<colgroup><col class="c1"><col class="c2"><col class="c3"></colgroup><tbody>${list.map(rowHtml).join("")}</tbody>`;
}
fill("props-small", rows);
fill("props-large", rows.slice(2));
```
